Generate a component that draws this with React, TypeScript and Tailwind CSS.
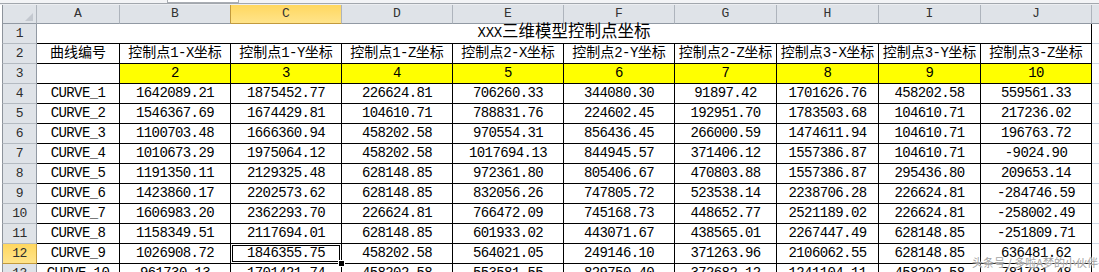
import React from "react";

const cols = [
  { l: "A", w: "w-[83px]" },
  { l: "B", w: "w-[111px]" },
  { l: "C", w: "w-[111px]" },
  { l: "D", w: "w-[111px]" },
  { l: "E", w: "w-[111px]" },
  { l: "F", w: "w-[111px]" },
  { l: "G", w: "w-[102px]" },
  { l: "H", w: "w-[102px]" },
  { l: "I", w: "w-[102px]" },
  { l: "J", w: "w-[111px]" },
];

const headers = [
  "曲线编号",
  "控制点1-X坐标",
  "控制点1-Y坐标",
  "控制点1-Z坐标",
  "控制点2-X坐标",
  "控制点2-Y坐标",
  "控制点2-Z坐标",
  "控制点3-X坐标",
  "控制点3-Y坐标",
  "控制点3-Z坐标",
];

const data: string[][] = [
  ["CURVE_1", "1642089.21", "1875452.77", "226624.81", "706260.33", "344080.30", "91897.42", "1701626.76", "458202.58", "559561.33"],
  ["CURVE_2", "1546367.69", "1674429.81", "104610.71", "788831.76", "224602.45", "192951.70", "1783503.68", "104610.71", "217236.02"],
  ["CURVE_3", "1100703.48", "1666360.94", "458202.58", "970554.31", "856436.45", "266000.59", "1474611.94", "104610.71", "196763.72"],
  ["CURVE_4", "1010673.29", "1975064.12", "458202.58", "1017694.13", "844945.57", "371406.12", "1557386.87", "104610.71", "-9024.90"],
  ["CURVE_5", "1191350.11", "2129325.48", "628148.85", "972361.80", "805406.67", "470803.88", "1557386.87", "295436.80", "209653.14"],
  ["CURVE_6", "1423860.17", "2202573.62", "628148.85", "832056.26", "747805.72", "523538.14", "2238706.28", "226624.81", "-284746.59"],
  ["CURVE_7", "1606983.20", "2362293.70", "226624.81", "766472.09", "745168.73", "448652.77", "2521189.02", "226624.81", "-258002.49"],
  ["CURVE_8", "1158349.51", "2117694.01", "628148.85", "601933.02", "443071.67", "438565.01", "2267447.49", "628148.85", "-251809.71"],
  ["CURVE_9", "1026908.72", "1846355.75", "458202.58", "564021.05", "249146.10", "371263.96", "2106062.55", "628148.85", "636481.62"],
  ["CURVE_10", "961730.13", "1701421.74", "458202.58", "553581.55", "829750.40", "372682.12", "1241104.11", "458202.58", "781781.48"],
];

function Mixed({ t, cjk }: { t: string; cjk: string }) {
  const parts = t.split(/([\u4e00-\u9fff]+)/);
  return (
    <span className="whitespace-nowrap">
      {parts.map((p, i) =>
        /[\u4e00-\u9fff]/.test(p) ? (
          <span key={i} className={cjk}>
            {p}
          </span>
        ) : (
          <span key={i}>{p}</span>
        )
      )}
    </span>
  );
}

function RowHead({ n, sel }: { n: number; sel?: boolean }) {
  return (
    <div
      className={
        sel
          ? "w-[35px] shrink-0 h-full border-l border-l-[#8d939b] border-r border-r-[#c29a3d] border-b border-b-[#c29a3d] bg-gradient-to-b from-[#ffd75e] to-[#ffe48a] flex items-center justify-center text-[13px] tracking-[-0.5px] text-[#2d2d2d]"
          : "w-[35px] shrink-0 h-full border-l border-l-[#8d939b] border-r border-r-[#9199a3] border-b border-b-[#b4bac1] bg-[#dfe3e8] flex items-center justify-center text-[13px] tracking-[-0.5px] text-[#2d2d2d]"
      }
    >
      {n}
    </div>
  );
}

export default function App() {
  return (
    <div className="relative w-[1099px] h-[272px] overflow-hidden bg-white text-black font-['Liberation_Mono','Noto_Sans_CJK_SC',monospace]">
      {/* top band */}
      <div className="h-[5px] flex flex-col">
        <div className="h-[3px] flex bg-[#f3f4f6]">
          <div className="w-[167px] shrink-0" />
          <div className="w-[72px] shrink-0 bg-white border-x border-b border-[#a9adb3]" />
        </div>
        <div className="h-[1px] bg-[#a2a7ad]" />
        <div className="h-[1px] bg-[#eceef1]" />
      </div>

      {/* column header */}
      <div className="flex h-[19px] pl-[2px]">
        <div className="w-[35px] shrink-0 h-full border-l border-l-[#8d939b] border-r border-r-[#aeb4bc] border-b border-b-[#9199a3] bg-[#dfe3e8] flex items-end justify-end pr-[3px] pb-[2px]">
          <svg width="8" height="8" viewBox="0 0 8 8">
            <polygon points="8,0 8,8 0,8" fill="#c3c8cf" />
          </svg>
        </div>
        {cols.map((c, i) => (
          <div
            key={c.l}
            className={
              c.w +
              " shrink-0 h-full flex items-center justify-center text-[13px] text-[#333] " +
              (i === 2
                ? "bg-gradient-to-b from-[#ffd75e] to-[#ffe48a] border-r border-r-[#aeb4bc] border-b border-b-[#c29a3d]"
                : i === 1
                ? "bg-[#dfe3e8] border-r border-r-[#c29a3d] border-b border-b-[#9199a3]"
                : "bg-[#dfe3e8] border-r border-r-[#aeb4bc] border-b border-b-[#9199a3]")
            }
          >
            {c.l}
          </div>
        ))}
        <div className="flex-1 h-full bg-[#dfe3e8] border-b border-b-[#9199a3]" />
      </div>

      {/* row 1: title */}
      <div className="flex h-[20px] pl-[2px]">
        <RowHead n={1} />
        <div className="w-[1055px] shrink-0 h-full border-r border-b border-black flex items-center justify-center text-[14px] tracking-[-0.3px]">
          <Mixed t="XXX三维模型控制点坐标" cjk="text-[16.5px] tracking-normal" />
        </div>
        <div className="flex-1 h-full border-b border-[#d0d7e5]" />
      </div>

      {/* row 2: headers */}
      <div className="flex h-[20px] pl-[2px]">
        <RowHead n={2} />
        {cols.map((c, i) => (
          <div
            key={c.l}
            className={c.w + " shrink-0 h-full border-r border-b border-black flex items-center justify-center overflow-hidden text-[14px] tracking-[-0.6px]"}
          >
            <Mixed t={headers[i]} cjk="text-[14px] tracking-normal" />
          </div>
        ))}
        <div className="flex-1 h-full border-b border-[#d0d7e5]" />
      </div>

      {/* row 3: index numbers */}
      <div className="flex h-[20px] pl-[2px]">
        <RowHead n={3} />
        {cols.map((c, i) => (
          <div
            key={c.l}
            className={
              c.w +
              " shrink-0 h-full border-r border-b border-black flex items-center justify-center text-[14px] tracking-[-0.6px] " +
              (i === 0 ? "bg-white" : "bg-[#ffff00]")
            }
          >
            {i === 0 ? "" : String(i + 1)}
          </div>
        ))}
        <div className="flex-1 h-full border-b border-[#d0d7e5]" />
      </div>

      {/* data rows */}
      {data.map((row, r) => {
        const n = r + 4;
        const sel = n === 12;
        return (
          <div key={n} className="flex h-[20px] pl-[2px]">
            <RowHead n={n} sel={sel} />
            {cols.map((c, i) => (
              <div
                key={c.l}
                className={c.w + " relative shrink-0 h-full border-r border-b border-black flex items-center justify-center text-[14px] tracking-[-0.6px]"}
              >
                {row[i]}
                {sel && i === 2 && (
                  <>
                    <div className="absolute left-[1px] top-[1px] right-[1px] bottom-[1px] border border-black" />
                    <div className="absolute right-[-4px] bottom-[-4px] w-[7px] h-[7px] bg-black border border-white z-10" />
                  </>
                )}
              </div>
            ))}
            <div className="flex-1 h-full border-b border-[#d0d7e5]" />
          </div>
        );
      })}

      {/* watermark */}
      <div className="absolute right-[1px] top-[257px] text-[11px] leading-none text-[#a3a3a3] font-['Noto_Sans_CJK_SC',sans-serif] [text-shadow:0_0_2px_#fff,0_0_2px_#fff] z-20 whitespace-nowrap">
        头条号 / 多啦A梦的小伙伴
      </div>
    </div>
  );
}
